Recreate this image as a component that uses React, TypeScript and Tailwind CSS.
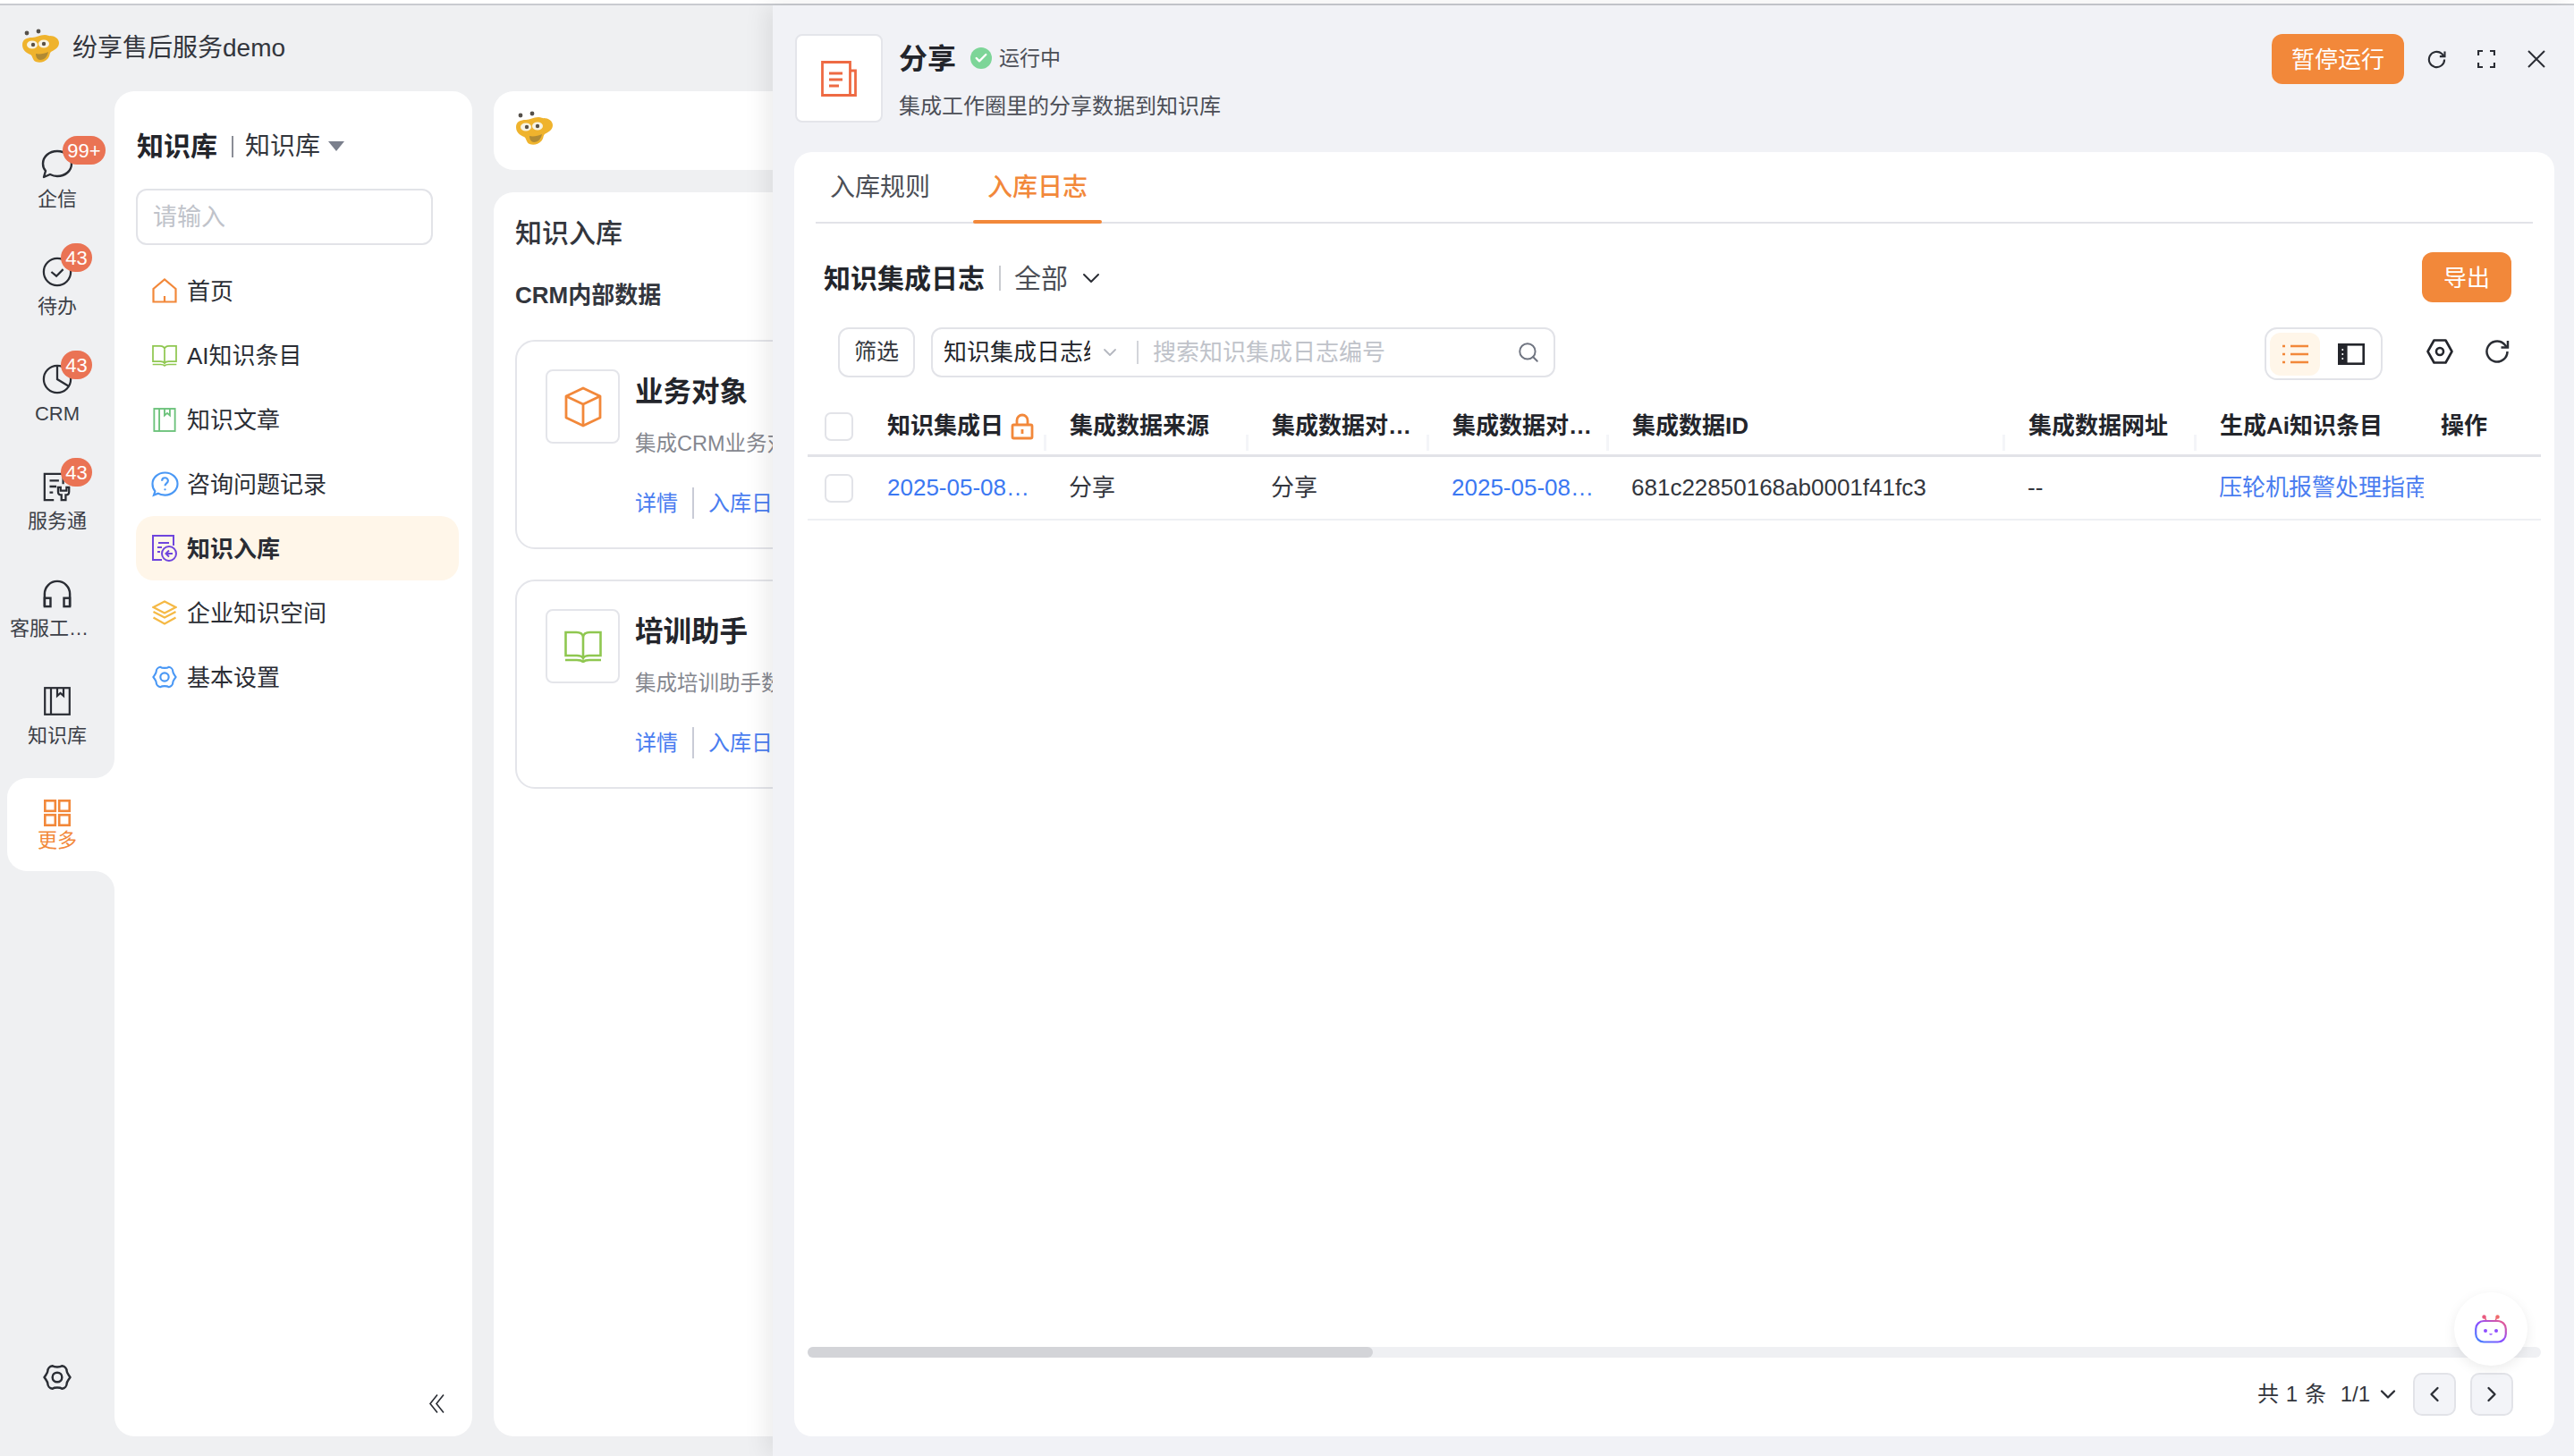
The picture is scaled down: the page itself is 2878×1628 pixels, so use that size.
import { Check, ChevronDown, ChevronLeft, ChevronRight, Search } from 'lucide-react';
import type { ReactNode } from 'react';

const font = '[font-family:"Liberation_Sans","Noto_Sans_CJK_SC",sans-serif]';

function Mascot({ className }: { className: string }) {
  return (
    <svg viewBox="0 0 42 44" className={`${className} blur-[0.5px]`}>
      <circle cx="6" cy="5" r="2.400" fill="#55504a" />
      <circle cx="19" cy="3" r="2.400" fill="#55504a" />
      <path d="M1 18c0-6 5-8 11-8 5 0 8-3 14-3 4 0 6 2 6 1 5 0 10 3 10 8 0 6-6 8-9 10-2 2-1 5-4 8-3 3-8 5-13 3-4-2-3-6-6-8-5-2-9-5-9-11z" fill="#efb32d" />
      <ellipse cx="12" cy="18" rx="6" ry="4.500" fill="#f7f3e4" />
      <ellipse cx="25" cy="17" rx="6" ry="4.500" fill="#f7f3e4" />
      <circle cx="13" cy="18" r="2.200" fill="#5a5145" />
      <circle cx="25" cy="17" r="2.200" fill="#5a5145" />
      <path d="M16 28c4 1 10 0 14-2-1 5-4 9-9 9-3 0-5-3-5-7z" fill="#b08a33" />
    </svg>
  );
}

function ChatIcon() {
  return (
    <svg viewBox="0 0 36 34" className="h-[34px] w-[36px]" fill="none" stroke="#2a2d34" strokeWidth="2.400">
      <path d="M18 2c9 0 16 6 16 14s-7 14-16 14c-3 0-6-1-8-2l-7 3 2-7c-2-2-3-5-3-8C2 8 9 2 18 2z" strokeLinejoin="round" />
    </svg>
  );
}

function TodoIcon() {
  return (
    <svg viewBox="0 0 36 36" className="h-[34px] w-[34px]" fill="none" stroke="#2a2d34" strokeWidth="2.400">
      <circle cx="18" cy="18" r="16" />
      <path d="M11 18l6 5 8-8" />
    </svg>
  );
}

function PieIcon() {
  return (
    <svg viewBox="0 0 36 36" className="h-[34px] w-[34px]" fill="none" stroke="#2a2d34" strokeWidth="2.400">
      <circle cx="18" cy="18" r="16" />
      <path d="M18 2v16l13 8" />
    </svg>
  );
}

function ServiceIcon() {
  return (
    <svg viewBox="0 0 36 36" className="h-[34px] w-[34px]" fill="none" stroke="#2a2d34" strokeWidth="2.400">
      <path d="M14 34H3V3h22v12" />
      <path d="M9 11h11M9 18h8M9 25h4" />
      <path d="M19 19v5c0 3 2 4 4 4v6h5v-6c2 0 4-1 4-4v-5l-3 0v4h-7v-4z" />
    </svg>
  );
}

function HeadsetIcon() {
  return (
    <svg viewBox="0 0 34 34" className="h-[34px] w-[32px]" fill="none" stroke="#2a2d34" strokeWidth="2.600">
      <path d="M2 32V17a15 15 0 0 1 30 0v15" />
      <rect x="2" y="22" width="7" height="10" />
      <rect x="25" y="22" width="7" height="10" />
    </svg>
  );
}

function BookmarkBook({ color, size }: { color: string; size: string }) {
  return (
    <svg viewBox="0 0 30 32" className={size} fill="none" stroke={color} strokeWidth="2.200">
      <rect x="1.200" y="1.200" width="27.600" height="29.600" />
      <path d="M8 1v30M15 1v9l3.500-3 3.500 3V1" />
    </svg>
  );
}

function OpenBook({ color, size }: { color: string; size: string }) {
  return (
    <svg viewBox="0 0 42 36" className={size} fill="none" stroke={color} strokeWidth="2.600">
      <path d="M1.500 28V2h12c4 0 7 2 7.500 5 .5-3 3.500-5 7.500-5h12v26H28c-3 0-6 1-7 3-1-2-4-3-7-3z" />
      <path d="M21 7v24M1 33h13c3 0 6 1 7 2 1-1 4-2 7-2h13" />
    </svg>
  );
}

function GridIcon() {
  return (
    <svg viewBox="0 0 30 30" className="h-[30px] w-[30px]" fill="none" stroke="#f2883a" strokeWidth="2.600">
      <rect x="1.300" y="1.300" width="11.500" height="11.500" />
      <rect x="17.200" y="1.300" width="11.500" height="11.500" />
      <rect x="1.300" y="17.200" width="11.500" height="11.500" />
      <rect x="17.200" y="17.200" width="11.500" height="11.500" />
    </svg>
  );
}

function HexGear({ className, color, stroke = 2.600 }: { className: string; color: string; stroke?: number }) {
  return (
    <svg viewBox="0 0 30 30" className={className} fill="none" stroke={color} strokeWidth={stroke} strokeLinejoin="round">
      <path d="M8.500 2.500h13L28.500 15l-7 12.500h-13L1.500 15z" />
      <circle cx="15" cy="15" r="4" />
    </svg>
  );
}

function FlowerGear({ className, color }: { className: string; color: string }) {
  return (
    <svg viewBox="0 0 30 30" className={className} fill="none" stroke={color} strokeWidth="2.300">
      <path d="M10 3c2 1.500 8 1.500 10 0 3 .5 5 3 5 5.500 0 2 2 4 3.500 6.500-1.500 2.500-3.500 4.500-3.500 6.500 0 2.500-2 5-5 5.500-2-1.500-8-1.500-10 0-3-.5-5-3-5-5.500 0-2-2-4-3.500-6.500C3 12.500 5 10.500 5 8.500 5 6 7 3.500 10 3z" />
      <circle cx="15" cy="15" r="5" />
    </svg>
  );
}

function RefreshIcon({ className, stroke = 2.400 }: { className: string; stroke?: number }) {
  return (
    <svg viewBox="0 0 28 28" className={className} fill="none" stroke="#2a2d34" strokeWidth={stroke}>
      <path d="M25.500 14A11.500 11.500 0 1 1 21.500 5.300L25 9" />
      <path d="M26 2v7.500h-7.500" />
    </svg>
  );
}

function RailItem({ icon, label, badge, labelClass = '' }: { icon: ReactNode; label: string; badge?: string; labelClass?: string }) {
  return (
    <div className="flex h-[120px] w-full flex-col items-center justify-center gap-2">
      <div className="relative flex h-9 items-center justify-center">
        {icon}
        {badge && (
          <span
            className={`absolute top-[-14px] flex h-8 items-center justify-center rounded-full bg-[#ea7354] text-[22px] text-white ${
              badge === '99+' ? 'left-[24px] w-12' : 'left-[21px] w-[35px]'
            }`}
          >
            {badge}
          </span>
        )}
      </div>
      <span className={`h-[26px] whitespace-nowrap text-[22px] leading-[26px] text-[#3c3f47] ${labelClass}`}>{label}</span>
    </div>
  );
}

const navItems: { label: string; icon: ReactNode; active?: boolean }[] = [
  {
    label: '首页',
    icon: (
      <svg viewBox="0 0 28 28" className="h-7 w-7" fill="none" stroke="#f2883a" strokeWidth="2.200">
        <path d="M1.500 26.500V12L14 1.500 26.500 12v14.500zM14 20v6.500" />
      </svg>
    ),
  },
  { label: 'AI知识条目', icon: <OpenBook color="#8fc750" size="h-[25px] w-[28px]" /> },
  { label: '知识文章', icon: <BookmarkBook color="#6cc27b" size="h-[27px] w-[26px]" /> },
  {
    label: '咨询问题记录',
    icon: (
      <svg viewBox="0 0 32 30" className="h-[29px] w-[31px]" fill="none" stroke="#4a98f5" strokeWidth="2.200">
        <path d="M16 1.500c8 0 14.500 5.800 14.500 13S24 27.500 16 27.500c-3 0-6-.5-8-2l-5 2 1.500-4.500C2.500 21 1.500 18 1.500 14.500 1.500 7.300 8 1.500 16 1.500z" />
        <path d="M12.500 11c0-2 1.500-3.500 3.500-3.500s3.500 1.500 3.500 3.300c0 3-3.500 3-3.500 6" />
        <circle cx="16" cy="21" r="1.200" fill="#4a98f5" stroke="none" />
      </svg>
    ),
  },
  {
    label: '知识入库',
    active: true,
    icon: (
      <svg viewBox="0 0 28 30" className="h-[30px] w-[28px]" fill="none" stroke="#6f45dd" strokeWidth="2">
        <path d="M11 28H1V1h23v11" />
        <path d="M7 9h12M6 14h5M6 19h3" />
        <circle cx="19" cy="21" r="8" fill="#fff6e9" />
        <path d="M23 21h-7M19 17.500 15.500 21l3.500 3.500" />
      </svg>
    ),
  },
  {
    label: '企业知识空间',
    icon: (
      <svg viewBox="0 0 28 28" className="h-7 w-7" fill="none" stroke="#f5b945" strokeWidth="2.200">
        <path d="M14 1.500 26.500 8 14 14.500 1.500 8z" />
        <path d="M1.500 13 14 19.500 26.500 13M1.500 19.500 14 26.500l12.500-7" />
      </svg>
    ),
  },
  { label: '基本设置', icon: <FlowerGear className="h-7 w-7" color="#4a98f5" /> },
];

function IntegrationCard({ icon, title, desc }: { icon: ReactNode; title: string; desc: string }) {
  return (
    <div className="flex h-[234px] gap-[17px] whitespace-nowrap rounded-[22px] border-2 border-[#e4e5ea] bg-white pl-8 pt-[31px]">
      <div className="flex h-[83px] w-[83px] shrink-0 items-center justify-center rounded-lg border-2 border-[#e4e5ea]">{icon}</div>
      <div>
        <div className="mt-[6px] text-[31.5px] font-bold leading-[38px] text-[#23252b]">{title}</div>
        <div className="mt-[24px] text-[23.5px] leading-[30px] text-[#85878f]">{desc}</div>
        <div className="mt-[34px] flex items-center text-[24px] leading-[30px] text-[#4a7df0]">
          <span>详情</span>
          <span className="mx-[16px] h-[35px] w-[2px] bg-[#c9cbd6]" />
          <span>入库日志</span>
        </div>
      </div>
    </div>
  );
}

const colClasses = 'grid grid-cols-[89px_203px_226px_202px_201px_443px_214px_247px_111px] items-center';

function ColHeader({ children, handle = true }: { children: ReactNode; handle?: boolean }) {
  return (
    <div className="relative flex h-full items-center pl-px">
      <span className="whitespace-nowrap text-[26px] font-bold text-[#23252b]">{children}</span>
      {handle && <span className="absolute bottom-[4px] left-[-28px] h-[18px] w-[3px] bg-[#f4f5f8]" />}
    </div>
  );
}

function Checkbox() {
  return <span className="ml-[19px] block h-8 w-8 rounded-[7px] border-2 border-[#e2e3e8] bg-white" />;
}

export default function App() {
  return (
    <div className={`relative flex h-[1628px] w-[2878px] flex-col overflow-hidden bg-[#eff0f2] ${font}`}>
      <div className="h-[6px] border-b-2 border-[#c9cbd0] bg-white" />

      <div className="flex h-[96px] items-center pl-6">
        <Mascot className="h-[44px] w-[42px]" />
        <span className="ml-[15px] text-[28px] text-[#33363d]">纷享售后服务demo</span>
      </div>

      <div className="flex h-[1504px]">
        {/* icon rail */}
        <div className="flex w-[128px] shrink-0 flex-col">
          <div className="mt-[39px] flex flex-col">
            <RailItem icon={<ChatIcon />} label="企信" badge="99+" />
            <RailItem icon={<TodoIcon />} label="待办" badge="43" />
            <RailItem icon={<PieIcon />} label="CRM" badge="43" />
            <RailItem icon={<ServiceIcon />} label="服务通" badge="43" />
            <RailItem icon={<HeadsetIcon />} label="客服工…" labelClass="pr-[18px]" />
            <RailItem icon={<BookmarkBook color="#2a2d34" size="h-[32px] w-[30px]" />} label="知识库" />
          </div>
          <div className="relative ml-2 mt-[9px] flex h-[104px] flex-col items-center justify-center rounded-l-[22px] bg-white pr-2">
            <div className="absolute right-0 top-[-22px] h-[22px] w-[22px] bg-white">
              <div className="h-full w-full rounded-br-[22px] bg-[#eff0f2]" />
            </div>
            <div className="absolute bottom-[-22px] right-0 h-[22px] w-[22px] bg-white">
              <div className="h-full w-full rounded-tr-[22px] bg-[#eff0f2]" />
            </div>
            <div className="flex h-9 items-center">
              <GridIcon />
            </div>
            <span className="text-[22px] leading-[26px] text-[#f2883a]">更多</span>
          </div>
          <div className="mt-auto flex justify-center pb-[50px]">
            <FlowerGear className="h-8 w-8" color="#2a2d34" />
          </div>
        </div>

        {/* menu panel */}
        <div className="relative h-full w-[400px] shrink-0 rounded-[22px] bg-white pl-6 pr-[15px]">
          <div className="mt-[30px] flex h-[61px] items-center pl-px pt-[2px]">
            <span className="text-[30px] font-bold text-[#23252b]">知识库</span>
            <span className="ml-[16px] h-6 w-[2px] bg-[#8a8d96]" />
            <span className="ml-[13px] text-[28px] text-[#33363d]">知识库</span>
            <span className="ml-[9px] h-0 w-0 border-x-[9px] border-t-[11px] border-x-transparent border-t-[#7a7f8c]" />
          </div>
          <div className="mt-[18px] flex h-[63px] w-[332px] items-center rounded-xl border-2 border-[#e2e3e8] pl-[17px] pt-[2px] text-[27px] text-[#c0c3ca]">
            请输入
          </div>
          <div className="mt-[15px] flex flex-col">
            {navItems.map((item) => (
              <div
                key={item.label}
                className={`flex h-[72px] items-center rounded-[20px] pl-[16px] text-[26px] text-[#2a2d34] ${
                  item.active ? 'bg-[#fff6e9] font-bold' : ''
                }`}
              >
                <span className="flex w-[32px] justify-center">{item.icon}</span>
                <span className="ml-[9px] pt-[2px]">{item.label}</span>
              </div>
            ))}
          </div>
          <svg viewBox="0 0 18 21" className="absolute bottom-[26px] right-[31px] h-[21px] w-[18px]" fill="none" stroke="#2a2d34" strokeWidth="1.600">
            <path d="M10 .5 2 10.500l8 10M17 .5 9 10.500l8 10" />
          </svg>
        </div>

        {/* content behind the drawer */}
        <div className="ml-6 flex min-w-0 flex-1 flex-col gap-[25px]">
          <div className="flex h-[88px] shrink-0 items-center rounded-[22px] bg-white pl-6">
            <Mascot className="h-[44px] w-[42px]" />
          </div>
          <div className="flex-1 rounded-[22px] bg-white pl-6 pr-6">
            <div className="mt-[28px] text-[30px] font-medium leading-9 text-[#33363d]">知识入库</div>
            <div className="mt-[33px] text-[26px] font-semibold leading-9 text-[#33363d]">CRM内部数据</div>
            <div className="mt-[32px] flex flex-col gap-[34px]">
              <IntegrationCard
                title="业务对象"
                desc="集成CRM业务对象数据到知识库"
                icon={
                  <svg viewBox="0 0 42 46" className="h-[46px] w-[42px]" fill="none" stroke="#f2883a" strokeWidth="2.800" strokeLinejoin="round">
                    <path d="M21 2 40 11v24l-19 9-19-9V11z" />
                    <path d="M2 11l19 9 19-9M21 20v24" />
                  </svg>
                }
              />
              <IntegrationCard
                title="培训助手"
                desc="集成培训助手数据到知识库"
                icon={<OpenBook color="#8fc750" size="h-[36px] w-[42px]" />}
              />
            </div>
          </div>
        </div>
      </div>

      {/* share detail drawer */}
      <div className="absolute bottom-0 left-[864px] right-0 top-[6px] flex flex-col bg-[#f1f2f6] shadow-[-8px_0_24px_rgba(0,0,0,0.08)]">
        <div className="flex h-[164px] shrink-0 pl-[25px] pt-[32px]">
          <div className="flex h-[99px] w-[98px] items-center justify-center rounded-lg border-2 border-[#e4e5ea] bg-white">
            <svg viewBox="0 0 40 40" className="h-10 w-10" fill="none" stroke="#ee6a43" strokeWidth="2.800">
              <path d="M1.500 1.500h31v37h-31z" />
              <path d="M33 11h5.500v27.500H27" />
              <path d="M9 14h15M9 21h15M9 28h11" />
            </svg>
          </div>
          <div className="ml-[18px]">
            <div className="flex h-[54px] items-center">
              <span className="pt-[2px] text-[32px] font-bold text-[#23252b]">分享</span>
              <span className="ml-[16px] flex h-6 w-6 items-center justify-center rounded-full bg-[#7dd598]">
                <Check className="h-4 w-4 text-white" strokeWidth={3.500} />
              </span>
              <span className="ml-2 text-[23px] text-[#4c4f57]">运行中</span>
            </div>
            <div className="mt-[9px] text-[24px] leading-[36px] text-[#4c4f57]">集成工作圈里的分享数据到知识库</div>
          </div>
          <div className="ml-auto flex h-[56px] items-center pr-[32px]">
            <button className="flex h-[56px] w-[148px] items-center justify-center rounded-xl bg-[#f2883a] pt-[2px] text-[26px] text-white">暂停运行</button>
            <RefreshIcon className="ml-[26px] h-[21px] w-[21px]" stroke={2.800} />
            <svg viewBox="0 0 20 20" className="ml-[35px] h-5 w-5" fill="none" stroke="#2a2d34" strokeWidth="2.200">
              <path d="M1 6V1h5M14 1h5v5M1 14v5h5M14 19h5v-5" />
            </svg>
            <svg viewBox="0 0 20 20" className="ml-[36px] h-5 w-5" fill="none" stroke="#2a2d34" strokeWidth="2">
              <path d="M1 1l18 18M19 1 1 19" />
            </svg>
          </div>
        </div>

        {/* main card */}
        <div className="relative ml-6 mr-[22px] flex h-[1436px] flex-col rounded-[20px] bg-white">
          <div className="mx-6 flex h-[80px] shrink-0 items-end border-b-2 border-[#e2e3e8]">
            <div className="flex h-full w-[176px] items-center pl-[16px] pt-[2px] text-[28px] text-[#4c4f57]">入库规则</div>
            <div className="relative flex h-full w-[144px] items-center justify-center pt-[2px] text-[28px] font-medium text-[#f2883a]">
              入库日志
              <span className="absolute bottom-[-2px] left-0 h-1 w-full rounded-sm bg-[#f2883a]" />
            </div>
          </div>

          <div className="relative flex h-[116px] shrink-0 items-center pl-[33px] pt-[6px]">
            <span className="text-[30px] font-bold text-[#23252b]">知识集成日志</span>
            <span className="ml-[16px] h-7 w-[2px] bg-[#c9cbd0]" />
            <span className="ml-[15px] text-[30px] text-[#4c4f57]">全部</span>
            <ChevronDown className="ml-[10px] h-8 w-8 text-[#2a2d34]" strokeWidth={1.500} />
            <button className="absolute right-[48px] top-[32px] flex h-[56px] w-[100px] items-center justify-center rounded-xl bg-[#f2883a] pt-[2px] text-[26px] text-white">导出</button>
          </div>

          <div className="flex h-[59px] shrink-0 items-start pl-[49px] pr-[50px]">
            <button className="flex h-[56px] w-[86px] items-center justify-center rounded-xl border-2 border-[#e2e3e8] text-[25px] text-[#33363d]">筛选</button>
            <div className="ml-[18px] flex h-[56px] w-[698px] items-center rounded-xl border-2 border-[#e2e3e8] pl-3 pr-[15px]">
              <span className="w-[164px] overflow-hidden whitespace-nowrap text-[26px] text-[#23252b]">知识集成日志编号</span>
              <ChevronDown className="ml-[10px] h-[24px] w-[24px] text-[#b4b7bf]" strokeWidth={1.800} />
              <span className="ml-[18px] h-[26px] w-[2px] bg-[#d3d5da]" />
              <span className="ml-[16px] text-[26px] text-[#c0c3ca]">搜索知识集成日志编号</span>
              <Search className="ml-auto h-[26px] w-[26px] text-[#6f7480]" strokeWidth={1.800} />
            </div>
            <div className="ml-auto flex h-[59px] w-[132px] items-center rounded-[14px] border-2 border-[#e2e3e8] px-[4px]">
              <span className="flex h-[48px] w-[56px] items-center justify-center rounded-xl bg-[#fff6e9]">
                <svg viewBox="0 0 30 24" className="h-6 w-[30px]" fill="none" stroke="#f2883a" strokeWidth="2.600">
                  <path d="M10 3h20M10 12h20M10 21h20" />
                  <path d="M1 3h4M1 12h4M1 21h4" strokeDasharray="3 1" />
                </svg>
              </span>
              <svg viewBox="0 0 30 24" className="ml-[20px] h-6 w-[30px]" fill="none" stroke="#23252b" strokeWidth="2.600">
                <rect x="1.300" y="1.300" width="27.400" height="21.400" />
                <rect x="1.300" y="1.300" width="8" height="21.400" fill="#23252b" />
                <path d="M5.300 6v2M5.300 11v2M5.300 16v2" stroke="#fff" strokeWidth="1.600" />
              </svg>
            </div>
            <HexGear className="ml-[49px] mt-[12px] h-[30px] w-[30px]" color="#23252b" />
            <RefreshIcon className="ml-[35px] mt-[13px] h-7 w-7" stroke={2.500} />
          </div>

          {/* table */}
          <div className="mx-[15px] mt-[20px] flex shrink-0 flex-col">
            <div className={`${colClasses} h-[66px] border-b-[3px] border-[#e2e3e8]`}>
              <Checkbox />
              <div className="flex h-full items-center">
                <span className="w-[130px] overflow-hidden whitespace-nowrap text-[26px] font-bold text-[#23252b]">知识集成日志</span>
                <svg viewBox="0 0 26 30" className="ml-[8px] h-[30px] w-[26px]" fill="none" stroke="#f2883a" strokeWidth="2.800">
                  <path d="M7 14V8a6 6 0 0 1 12 0v6" />
                  <rect x="2" y="13" width="22" height="15" rx="1.500" />
                  <path d="M13 18v5" />
                </svg>
              </div>
              <ColHeader>集成数据来源</ColHeader>
              <ColHeader>集成数据对…</ColHeader>
              <ColHeader>集成数据对…</ColHeader>
              <ColHeader>集成数据ID</ColHeader>
              <ColHeader>集成数据网址</ColHeader>
              <ColHeader>生成Ai知识条目</ColHeader>
              <ColHeader handle={false}>操作</ColHeader>
            </div>
            <div className={`${colClasses} h-[71px] border-b-2 border-[#eef0f3] text-[26px] text-[#33363d]`}>
              <Checkbox />
              <span className="whitespace-nowrap text-[#3b78f2]">2025-05-08…</span>
              <span>分享</span>
              <span>分享</span>
              <span className="whitespace-nowrap text-[#3b78f2]">2025-05-08…</span>
              <span>681c22850168ab0001f41fc3</span>
              <span>--</span>
              <span className="w-[229px] overflow-hidden whitespace-nowrap text-[#4a7df0]">压轮机报警处理指南</span>
              <span />
            </div>
          </div>

          {/* scrollbar + pagination */}
          <div className="mx-[15px] mt-auto h-[12px] shrink-0 rounded-full bg-[#eff0f3]">
            <div className="h-full w-[632px] rounded-full bg-[#d3d4d8]" />
          </div>
          <div className="flex h-[88px] shrink-0 items-center justify-end pb-[6px] pr-[46px] text-[24px] text-[#33363d]">
            <span className="whitespace-pre tracking-[0.6px]">共 1 条</span>
            <span className="ml-[15px]">1/1</span>
            <ChevronDown className="ml-[6px] h-7 w-7 text-[#2a2d34]" strokeWidth={2} />
            <span className="ml-[14px] flex h-12 w-12 items-center justify-center rounded-[10px] border-2 border-[#e2e3e8] bg-[#f3f4f8]">
              <ChevronLeft className="h-7 w-7 text-[#2a2d34]" strokeWidth={2} />
            </span>
            <span className="ml-4 flex h-12 w-12 items-center justify-center rounded-[10px] border-2 border-[#e2e3e8] bg-[#f3f4f8]">
              <ChevronRight className="h-7 w-7 text-[#2a2d34]" strokeWidth={2} />
            </span>
          </div>

          {/* assistant bubble */}
          <div className="absolute bottom-[79px] right-[30px] flex h-[82px] w-[82px] items-center justify-center rounded-full bg-white shadow-[0_4px_14px_rgba(0,0,0,0.08)]">
            <svg viewBox="0 0 36 32" className="h-8 w-9" fill="none">
              <defs>
                <linearGradient id="bot" x1="0" y1="1" x2="1" y2="0">
                  <stop offset="0" stopColor="#3f86ff" />
                  <stop offset="0.5" stopColor="#8e4dff" />
                  <stop offset="1" stopColor="#ef5d86" />
                </linearGradient>
              </defs>
              <path d="M11 2l2 5M25 2l-2 5" stroke="#e85a7f" strokeWidth="1.500" />
              <circle cx="10.500" cy="2.500" r="2.200" fill="#e85a7f" />
              <circle cx="25.500" cy="2.500" r="2.200" fill="#ef6b6b" />
              <rect x="1.200" y="7" width="33.600" height="23.500" rx="9" stroke="url(#bot)" strokeWidth="2.200" />
              <circle cx="12" cy="18" r="2" fill="#8e4dff" />
              <circle cx="24" cy="18" r="2" fill="#8e4dff" />
              <path d="M16.500 21.500q1.500 1 3 0" stroke="#8e4dff" strokeWidth="1.300" />
            </svg>
          </div>
        </div>
      </div>
    </div>
  );
}
